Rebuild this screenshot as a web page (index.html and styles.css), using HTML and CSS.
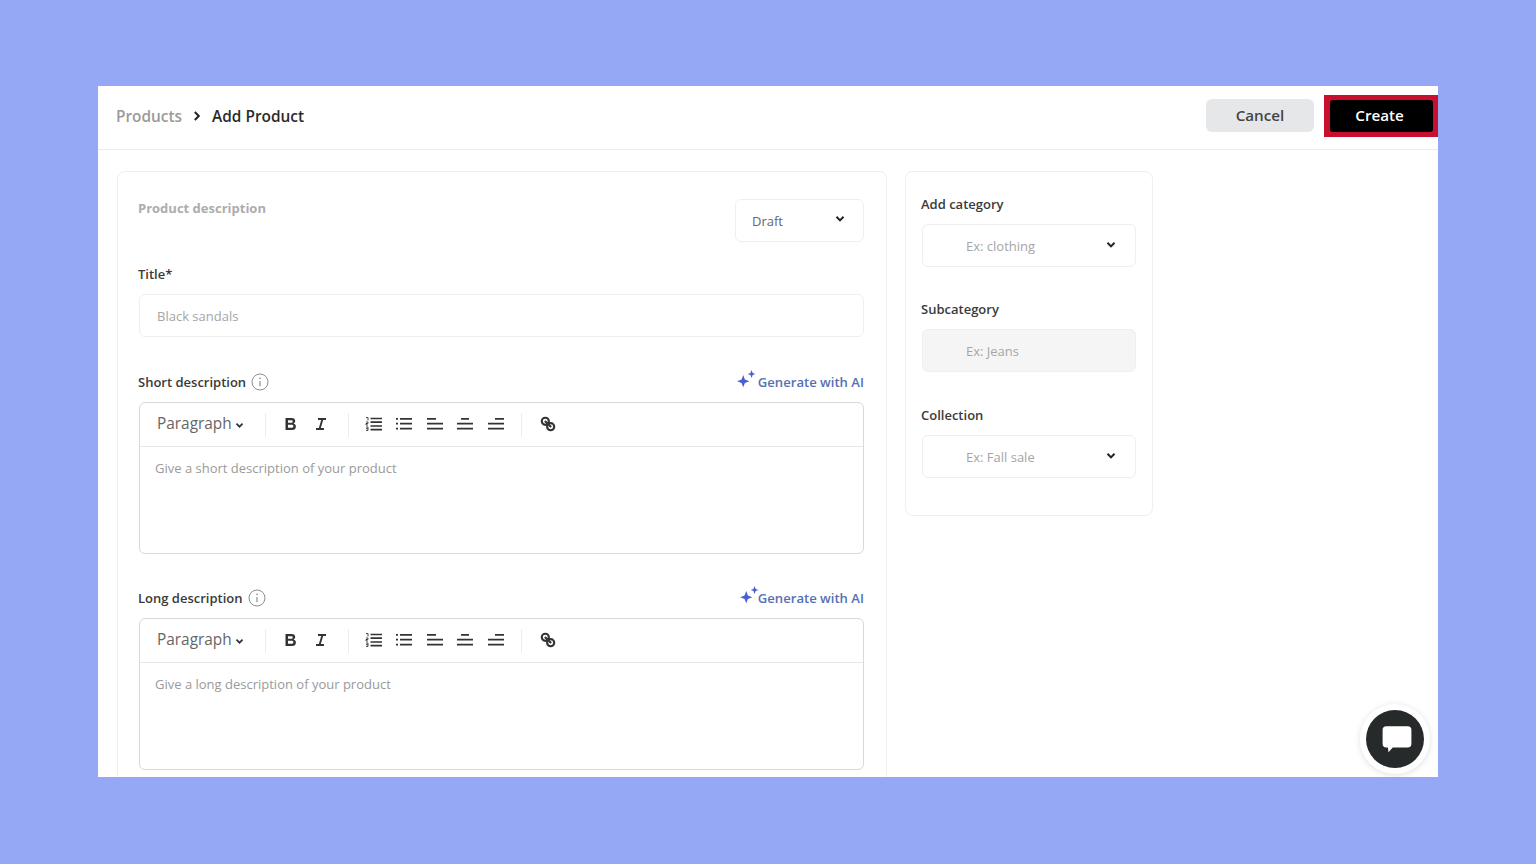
FILE: index.html
```html
<!DOCTYPE html>
<html lang="en">
<head>
    <meta charset="UTF-8">
    <meta name="viewport" content="width=device-width, initial-scale=1.0">
    <title>Add Product</title>
    <link rel="stylesheet" href="styles.css">
</head>
<body>
    <svg class="icon-defs" width="0" height="0">
        <symbol id="i-chevron" viewBox="0 0 10 8"><path d="M1.500 1.800 5 5.400l3.500-3.600" fill="none" stroke="currentColor" stroke-width="2"/></symbol>
        <symbol id="i-info" viewBox="0 0 18 18"><circle cx="9" cy="9" r="8" fill="none" stroke="currentColor"/><path d="M9 8v5.200" stroke="currentColor" stroke-width="1.200"/><circle cx="9" cy="5.400" r=".8" fill="currentColor"/></symbol>
        <symbol id="i-spark" viewBox="0 0 18 18"><path d="M6.500 5.500 8 9.500l4 1.500-4 1.500-1.500 4-1.500-4-4-1.500 4-1.500zM14 1l1 2.500 2.500 1-2.500 1-1 2.500-1-2.500-2.500-1 2.500-1z" fill="currentColor"/></symbol>
        <symbol id="i-bold" viewBox="0 0 16 16"><path d="M2.500 2h6.200c2.200 0 3.500 1.100 3.500 2.900 0 1.200-.6 2.100-1.700 2.500 1.500.4 2.400 1.500 2.400 3 0 2.200-1.500 3.600-3.800 3.600H2.500zM5 4.200v2.500h3.300c.9 0 1.400-.5 1.400-1.300s-.5-1.200-1.400-1.200zm0 4.600v3h3.700c1.100 0 1.700-.6 1.700-1.500s-.6-1.500-1.700-1.500z" fill="currentColor"/></symbol>
        <symbol id="i-italic" viewBox="0 0 16 16"><path d="M5 3h8M3 13h8M9.500 3l-3 10" fill="none" stroke="currentColor" stroke-width="1.900"/></symbol>
        <symbol id="i-ol" viewBox="0 0 18 16"><path d="M5.500 2.500H17M5.500 6.200H17M5.500 10H17M5.500 13.700H17" stroke="currentColor" stroke-width="1.700"/><path d="M1 1.500h2v3M1 6h2v1.500H1V9h2M1 11h2v3.500H1M1 12.700h2" fill="none" stroke="currentColor" stroke-width=".9"/></symbol>
        <symbol id="i-ul" viewBox="0 0 18 16"><path d="M5 2.800h12M5 7.700h12M5 12.600h12M1 2.800h2M1 7.700h2M1 12.600h2" stroke="currentColor" stroke-width="1.700"/></symbol>
        <symbol id="i-left" viewBox="0 0 18 16"><path d="M1 2.800h9M1 7.700h16M1 12.600h16" stroke="currentColor" stroke-width="1.700"/></symbol>
        <symbol id="i-center" viewBox="0 0 18 16"><path d="M5 2.800h8M1 7.700h16M1 12.600h16" stroke="currentColor" stroke-width="1.700"/></symbol>
        <symbol id="i-right" viewBox="0 0 18 16"><path d="M8 2.800h9M1 7.700h16M1 12.600h16" stroke="currentColor" stroke-width="1.700"/></symbol>
        <symbol id="i-link" viewBox="0 0 18 18"><g fill="none" stroke="currentColor" stroke-width="2.400"><circle cx="6" cy="6" r="4"/><circle cx="12" cy="12" r="4"/><path d="M5.500 5.500l7 7"/></g></symbol>
    </svg>

    <div class="window">
        <header class="topbar">
            <nav class="crumbs">
                <span class="crumb-root">Products</span>
                <svg class="crumb-sep" viewBox="0 0 8 10"><path d="M1.800 1 5.800 5l-4 4" fill="none" stroke="currentColor" stroke-width="2"/></svg>
                <span class="crumb-current">Add Product</span>
            </nav>
            <div class="actions">
                <button class="btn-cancel" type="button">Cancel</button>
                <div class="create-mark"><button class="btn-create" type="button">Create</button></div>
            </div>
        </header>

        <main class="content">
            <section class="card card-main">
                <div class="card-head">
                    <h2>Product description</h2>
                    <div class="select select-status">
                        <span class="select-value">Draft</span>
                        <svg class="chevron"><use href="#i-chevron"/></svg>
                    </div>
                </div>

                <label class="field-label title-label">Title*</label>
                <div class="input">Black sandals</div>

                <div class="editor-head">
                    <span class="field-label">Short description</span>
                    <svg class="info"><use href="#i-info"/></svg>
                    <a class="ai-link" href="#"><svg class="spark"><use href="#i-spark"/></svg>Generate with AI</a>
                </div>
                <div class="editor">
                    <div class="toolbar">
                        <span class="tb-style">Paragraph<svg class="tb-chevron"><use href="#i-chevron"/></svg></span>
                        <span class="tb-group tb-marks">
                            <svg class="tb-icon"><use href="#i-bold"/></svg>
                            <svg class="tb-icon"><use href="#i-italic"/></svg>
                        </span>
                        <span class="tb-group tb-lists">
                            <svg class="tb-icon"><use href="#i-ol"/></svg>
                            <svg class="tb-icon"><use href="#i-ul"/></svg>
                            <svg class="tb-icon"><use href="#i-left"/></svg>
                            <svg class="tb-icon"><use href="#i-center"/></svg>
                            <svg class="tb-icon"><use href="#i-right"/></svg>
                        </span>
                        <span class="tb-group tb-last">
                            <svg class="tb-icon"><use href="#i-link"/></svg>
                        </span>
                    </div>
                    <div class="editor-body">Give a short description of your product</div>
                </div>

                <div class="editor-head">
                    <span class="field-label">Long description</span>
                    <svg class="info"><use href="#i-info"/></svg>
                    <a class="ai-link" href="#"><svg class="spark spark-near"><use href="#i-spark"/></svg>Generate with AI</a>
                </div>
                <div class="editor">
                    <div class="toolbar">
                        <span class="tb-style">Paragraph<svg class="tb-chevron"><use href="#i-chevron"/></svg></span>
                        <span class="tb-group tb-marks">
                            <svg class="tb-icon"><use href="#i-bold"/></svg>
                            <svg class="tb-icon"><use href="#i-italic"/></svg>
                        </span>
                        <span class="tb-group tb-lists">
                            <svg class="tb-icon"><use href="#i-ol"/></svg>
                            <svg class="tb-icon"><use href="#i-ul"/></svg>
                            <svg class="tb-icon"><use href="#i-left"/></svg>
                            <svg class="tb-icon"><use href="#i-center"/></svg>
                            <svg class="tb-icon"><use href="#i-right"/></svg>
                        </span>
                        <span class="tb-group tb-last">
                            <svg class="tb-icon"><use href="#i-link"/></svg>
                        </span>
                    </div>
                    <div class="editor-body">Give a long description of your product</div>
                </div>
            </section>

            <aside class="card card-side">
                <label class="field-label">Add category</label>
                <div class="select">
                    <span class="select-value">Ex: clothing</span>
                    <svg class="chevron"><use href="#i-chevron"/></svg>
                </div>
                <label class="field-label">Subcategory</label>
                <div class="select select-disabled">
                    <span class="select-value">Ex: Jeans</span>
                </div>
                <label class="field-label">Collection</label>
                <div class="select">
                    <span class="select-value">Ex: Fall sale</span>
                    <svg class="chevron"><use href="#i-chevron"/></svg>
                </div>
            </aside>
        </main>

        <button class="chat-btn" type="button">
            <svg viewBox="0 0 30 30"><path d="M5 3h20a3.500 3.500 0 0 1 3.500 3.500v13A3.500 3.500 0 0 1 25 23H11l-4 4.500-.5-4.500H5a3.500 3.500 0 0 1-3.500-3.500v-13A3.500 3.500 0 0 1 5 3z" fill="#fff"/></svg>
        </button>
    </div>
</body>
</html>
```

FILE: styles.css
```css
* {
    margin: 0;
    padding: 0;
    box-sizing: border-box;
}

html, body {
    height: 100%;
}

body {
    padding: 86px 98px 87px;
    background-color: #94a8f6;
    font-family: "Open Sans", Arial, sans-serif;
    color: #333;
    overflow: hidden;
}

.icon-defs {
    position: absolute;
}

.window {
    position: relative;
    height: 691px;
    background-color: #fff;
    overflow: hidden;
}

/* Top bar */
.topbar {
    display: flex;
    justify-content: space-between;
    align-items: center;
    height: 64px;
    padding: 0 0 4px 18px;
    border-bottom: 1px solid #ececec;
}

.crumbs {
    display: flex;
    align-items: center;
    margin-top: 1px;
    font-size: 15.400px;
    font-weight: 600;
}

.crumb-root {
    color: #9a9a9a;
}

.crumb-sep {
    width: 8px;
    height: 10px;
    margin: 0 11px;
    color: #222;
}

.crumb-current {
    color: #2b2b2b;
}

.actions {
    display: flex;
    align-items: center;
}

.btn-cancel {
    width: 108px;
    height: 33px;
    margin-right: 10px;
    padding-bottom: 2px;
    border: none;
    border-radius: 6px;
    background-color: #e6e7e8;
    color: #444;
    font: 600 15.200px "Open Sans", Arial, sans-serif;
}

.create-mark {
    width: 114px;
    height: 42px;
    padding: 5px 5px 5px 6px;
    background-color: #c8102e;
}

.btn-create {
    width: 100%;
    height: 100%;
    padding: 0 4px 2px 0;
    border: none;
    border-radius: 3px;
    background-color: #000;
    color: #fff;
    font: 600 15.200px "Open Sans", Arial, sans-serif;
}

/* Cards */
.content {
    display: flex;
    align-items: flex-start;
    padding: 21px 0 0 19px;
}

.card {
    border: 1px solid #efefef;
    border-radius: 8px;
    background-color: #fff;
}

.card-main {
    width: 770px;
    height: 640px;
    margin-right: 18px;
    padding: 26px 22px 0 21px;
}

.card-side {
    width: 248px;
    height: 345px;
    padding: 23px 16px 0;
}

.card-head {
    display: flex;
    justify-content: space-between;
    align-items: flex-start;
    height: 67px;
}

.card-head h2 {
    margin: 1px 0 0 -1px;
    font-size: 13px;
    font-weight: 700;
    line-height: 18px;
    color: #adadad;
}

.field-label {
    display: block;
    margin-left: -1px;
    font-size: 13px;
    font-weight: 600;
    line-height: 18px;
    color: #3a3a3a;
}

.title-label {
    margin-bottom: 11px;
}

.input {
    height: 43px;
    padding-left: 17px;
    border: 1px solid #efefef;
    border-radius: 6px;
    font-size: 13px;
    line-height: 42px;
    color: #a5a5a5;
}

/* Selects */
.select {
    position: relative;
    height: 43px;
    margin: 11px 0 33px;
    padding-left: 43px;
    border: 1px solid #efefef;
    border-radius: 6px;
    font-size: 13px;
    line-height: 42px;
    color: #a5a5a5;
}

.select-status {
    width: 129px;
    margin: 1px 0 0;
    padding-left: 16px;
    color: #666;
}

.select-disabled {
    margin-bottom: 34px;
    background-color: #f5f5f5;
}

.chevron {
    position: absolute;
    top: 16px;
    right: 19px;
    width: 10px;
    height: 8px;
    color: #222;
}

.select-status .chevron {
    top: 15px;
    right: 18px;
}

/* Rich text editors */
.editor-head {
    display: flex;
    align-items: center;
    height: 20px;
    margin: 35px 0 10px;
}

.editor + .editor-head {
    margin-top: 34px;
}

.info {
    width: 18px;
    height: 18px;
    margin-left: 5px;
    color: #8d8d8d;
}

.ai-link {
    display: flex;
    align-items: center;
    margin-left: auto;
    font-size: 13.100px;
    font-weight: 600;
    color: #5470b4;
    text-decoration: none;
}

.spark {
    width: 20px;
    height: 20px;
    margin: -6px 2px 0 0;
    color: #4a5fd0;
}

.spark-near {
    margin-right: -1px;
}

.editor {
    height: 152px;
    border: 1px solid #d9d9d9;
    border-radius: 6px;
    overflow: hidden;
}

.toolbar {
    display: flex;
    align-items: center;
    height: 44px;
    border-bottom: 1px solid #e6e6e6;
}

.tb-style {
    display: flex;
    align-items: center;
    width: 126px;
    height: 24px;
    padding: 0 0 2px 17px;
    border-right: 1px solid #ececec;
    font-size: 15.400px;
    color: #666;
}

.tb-chevron {
    width: 9px;
    height: 7px;
    margin: 3px 0 0 3px;
    color: #333;
}

.tb-group {
    display: flex;
    align-items: center;
    height: 24px;
    padding-bottom: 1px;
    border-right: 1px solid #ececec;
}

.tb-marks {
    width: 83px;
    padding-left: 16px;
    gap: 12px;
}

.tb-lists {
    width: 173px;
    padding-left: 16px;
    gap: 12.400px;
}

.tb-last {
    padding-left: 17px;
    border-right: none;
}

.tb-icon {
    width: 18px;
    height: 16px;
    color: #333;
}

.editor-body {
    padding: 12px 15px;
    font-size: 13px;
    line-height: 18px;
    color: #9a9a9a;
}

/* Chat bubble */
.chat-btn {
    position: absolute;
    right: 14px;
    bottom: 9px;
    display: flex;
    align-items: center;
    justify-content: center;
    width: 58px;
    height: 58px;
    padding-left: 3px;
    border: none;
    border-radius: 50%;
    background-color: #262a2b;
    box-shadow: 0 0 0 6px #fff, 0 1px 6px 6px rgba(0, 0, 0, 0.12);
}

.chat-btn svg {
    width: 32px;
    height: 32px;
}
```
